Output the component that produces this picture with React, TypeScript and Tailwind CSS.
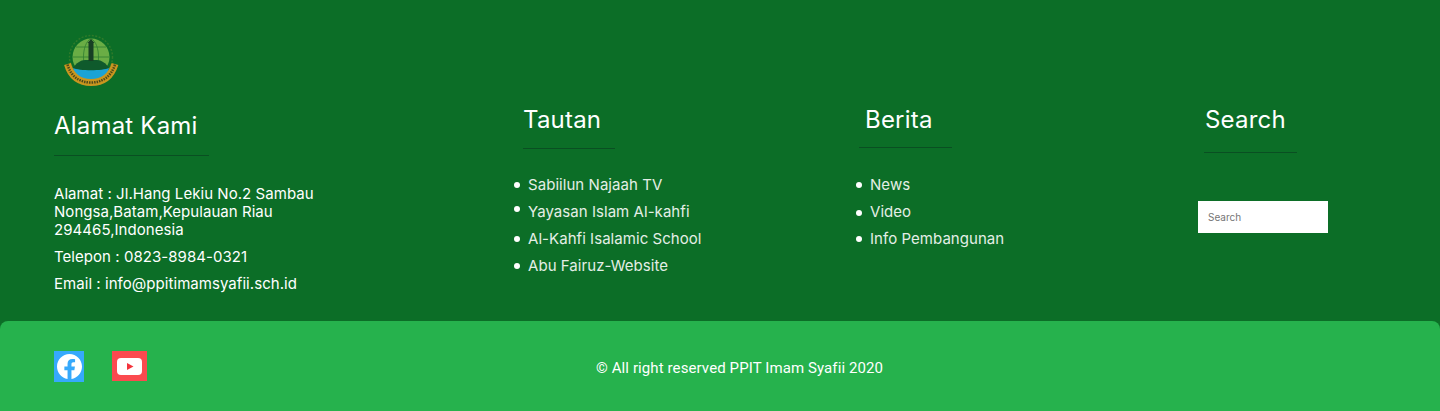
import { FC } from 'react';

const tautan = [
  { label: 'Sabiilun Najaah TV', bullet: '' },
  { label: 'Yayasan Islam Al-kahfi', bullet: '-translate-y-[3px]' },
  { label: 'Al-Kahfi Isalamic School', bullet: '' },
  { label: 'Abu Fairuz-Website', bullet: '' },
];
const berita = [
  { label: 'News', bullet: '' },
  { label: 'Video', bullet: 'translate-y-px' },
  { label: 'Info Pembangunan', bullet: '' },
];

// Rough drawing of the school crest
const Logo: FC = () => (
  <svg width="58" height="54" viewBox="0 0 58 54" className="block">
    <circle cx="29" cy="23" r="21.500" fill="none" stroke="#2f7a2a" strokeWidth="1.500" strokeDasharray="2 1.500" />
    <circle cx="29" cy="23" r="18.500" fill="#6aad45" />
    <path d="M11 23h36M14 13h30M14 33h30M29 4.500v37M29 4.500c-10 5-10 32 0 37M29 4.500c10 5 10 32 0 37" fill="none" stroke="#2f7d30" strokeWidth="0.800" />
    <path d="M11 34c3-5 8-8 12-8h12c4 0 9 3 12 8l-3 6H14z" fill="#0f5a2c" />
    <rect x="26.500" y="9" width="5" height="18" fill="#173f24" />
    <path d="M25.500 9h7l-3.500-4z" fill="#173f24" />
    <path d="M11 34c6 3 30 3 36 0l-2 8c-4 4-10 5-16 5s-12-1-16-5z" fill="#1ba3d6" />
    <path d="M5.500 30C9 43 18 48.500 29 48.500S49 43 53 30" fill="none" stroke="#c9961f" strokeWidth="7" />
    <path d="M5.500 30.500C9 43 18 48.500 29 48.500S49 43 53 30.500" fill="none" stroke="#4f4a1a" strokeWidth="2.500" strokeDasharray="1.500 1" />
  </svg>
);

const Heading: FC<{ title: string; className?: string }> = ({ title, className }) => (
  <div className={className}>
    <h3 className="text-[24px] leading-[29px] font-normal text-white tracking-[0.2px]">{title}</h3>
  </div>
);

const LinkList: FC<{ items: { label: string; bullet: string }[] }> = ({ items }) => (
  <ul className="flex flex-col gap-[9px]">
    {items.map((item) => (
      <li key={item.label} className="flex items-center h-[18px] text-[15px] leading-[18px] text-[#e4eee6] tracking-[0.05px]">
        <span className={`w-[6px] h-[6px] rounded-full bg-white mr-[8px] ${item.bullet}`} />
        {item.label}
      </li>
    ))}
  </ul>
);

export default function App() {
  return (
    <footer className="w-[1440px] h-[411px] overflow-hidden bg-[#0c6e27] font-['Inter',sans-serif] flex flex-col">
      <div className="h-[321px] flex pl-[54px]">
        {/* Alamat */}
        <div className="w-[460px] pt-[34px]">
          <div className="pl-[8px]">
            <Logo />
          </div>
          <Heading title="Alamat Kami" className="mt-[23px]" />
          <div className="mt-[15px] w-[155px] h-px bg-[#0a4f22]" />
          <div className="mt-[29px] w-[270px] text-[15px] text-white tracking-[0.05px]">
            <p className="leading-[18px] w-[270px]">Alamat : Jl.Hang Lekiu No.2 Sambau Nongsa,Batam,Kepulauan Riau 294465,Indonesia</p>
            <p className="leading-[18px] mt-[9px]">Telepon : 0823-8984-0321</p>
            <p className="leading-[18px] mt-[9px]">Email : info@ppitimamsyafii.sch.id</p>
          </div>
        </div>

        {/* Tautan */}
        <div className="w-[342px] pt-[105px]">
          <Heading title="Tautan" className="pl-[9px]" />
          <div className="mt-[14px] ml-[9px] w-[92px] h-px bg-[#0a4f22]" />
          <div className="mt-[27px]">
            <LinkList items={tautan} />
          </div>
        </div>

        {/* Berita */}
        <div className="w-[342px] pt-[105px]">
          <Heading title="Berita" className="pl-[9px]" />
          <div className="mt-[13px] ml-[3px] w-[93px] h-px bg-[#0a4f22]" />
          <div className="mt-[28px]">
            <LinkList items={berita} />
          </div>
        </div>

        {/* Search */}
        <div className="pt-[105px]">
          <Heading title="Search" className="pl-[7px]" />
          <div className="mt-[18px] ml-[6px] w-[93px] h-px bg-[#0a4f22]" />
          <input
            placeholder="Search"
            className="mt-[48px] block w-[130px] h-[32px] bg-white px-[10px] text-[10px] outline-none placeholder:text-[#757575]"
          />
        </div>
      </div>

      <div className="h-[90px] rounded-t-[8px] bg-[#26b24d] flex items-start relative pl-[54px] pt-[30px]">
        <div className="flex items-start gap-[28px]">
          <div className="w-[30px] h-[31px] bg-[#36a9fb] flex items-center justify-center">
            <svg width="25" height="25" viewBox="0 0 24 24">
              <path
                fill="#ffffff"
                d="M24 12.073C24 5.405 18.627 0 12 0S0 5.405 0 12.073c0 6.026 4.388 11.020 10.125 11.927v-8.437H7.078v-3.490h3.047V9.413c0-3.026 1.792-4.697 4.533-4.697 1.312 0 2.686.235 2.686.235v2.971h-1.513c-1.491 0-1.956.930-1.956 1.886v2.265h3.328l-.532 3.490h-2.796V24C19.612 23.093 24 18.099 24 12.073z"
              />
            </svg>
          </div>
          <div className="w-[35px] h-[30px] bg-[#fb4a4f] flex items-center justify-center">
            <svg width="25" height="17" viewBox="0 0 25 17">
              <rect width="25" height="17" rx="4" fill="#ffffff" />
              <path d="M10 5l6.500 3.500-6.500 3.500z" fill="#f4333c" />
            </svg>
          </div>
        </div>
        <p className="absolute left-[596px] top-[38px] font-['Roboto',sans-serif] text-[15px] leading-[18px] font-normal tracking-[0.1px] text-white">
          © All right reserved PPIT Imam Syafii 2020
        </p>
      </div>
    </footer>
  );
}
